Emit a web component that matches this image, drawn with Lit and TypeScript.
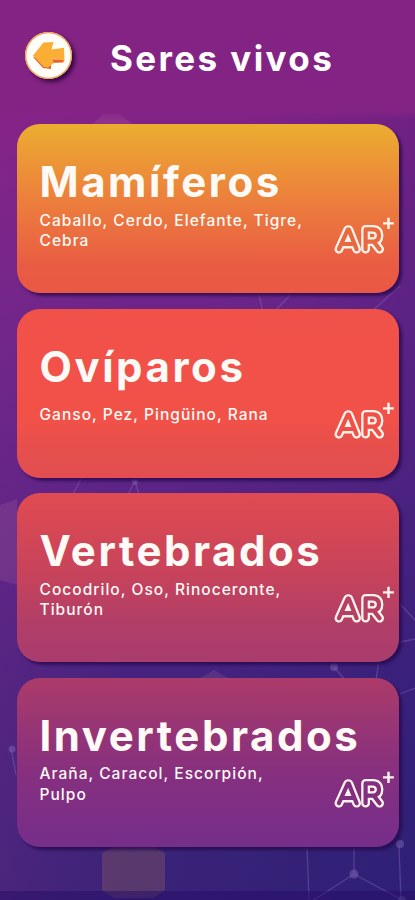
import { LitElement, html, css, svg } from "lit";
import { customElement, property } from "lit/decorators.js";

@customElement("ar-badge")
class ArBadge extends LitElement {
  static styles = css`
    :host { display: block; width: 62px; height: 42px; }
    svg { display: block; }
    .outer { stroke: #fff3ea; stroke-width: 8.8; }
    .inner { stroke: var(--fill); stroke-width: 4.2; }
    .stroke { fill: none; stroke-linecap: round; stroke-linejoin: round; }
    .plus { fill: none; stroke: #fff6ef; stroke-width: 2.4; }
  `;
  render() {
    const a = "M6.9 32.2L15.8 12.6H16.8L24.6 32.2M10.7 27H22";
    const r = "M33.6 32.2V12.4H41.5Q47 13.1 47 18.4Q47 23.8 41.5 24.6H34M42 25L47.6 32.2";
    return html`<svg width="62" height="42" viewBox="0 0 62 42">
      ${[a, r].map((d) => svg`
        <path class="stroke outer" d=${d} />
        <path class="stroke inner" d=${d} />`)}
      <path class="plus" d="M56.5 0.7V12M51 6.4H61.8" />
    </svg>`;
  }
}

@customElement("category-card")
class CategoryCard extends LitElement {
  @property() heading = "";
  @property() animals = "";
  @property({ reflect: true }) tone = "";

  static styles = css`
    :host {
      display: block;
      box-sizing: border-box;
      position: relative;
      height: 169px;
      border-radius: 23px;
      padding: 31px 0 0 22.5px;
      color: #fffaf6;
      box-shadow: 3px 3px 3px rgba(38, 10, 75, 0.75);
    }
    :host([tone="amber"]) { background: linear-gradient(#ebae30, #ec9a35 18%, #ec7c3d 48%, #e95c43 84%, #e95843); --fill: #e96940; }
    :host([tone="coral"]) { background: linear-gradient(#f05149, #f25148 65%, #e54f4d 84%, #e24e51); --fill: #f15048; }
    :host([tone="rose"]) { background: linear-gradient(#e04b50, #c7435b 48%, #b03e68 78%, #a93c6d); --fill: #b63f65; }
    :host([tone="plum"]) { background: linear-gradient(#ac3b69, #983575 28%, #852f80 60%, #752e8a); --fill: #822f82; }
    .heading {
      margin: 0;
      font: 700 42px/54px "Inter", sans-serif;
      letter-spacing: 2.55px;
      white-space: nowrap;
    }
    .animals {
      margin: 1.5px 0 0;
      width: 270px;
      font: 500 15.5px/20.5px "Inter", sans-serif;
      letter-spacing: 1.03px;
    }
    :host([tone="coral"]) .animals { margin-top: 11.5px; }
    .badge { position: absolute; right: 5px; bottom: 34px; }
  `;
  render() {
    return html`
      <h2 class="heading">${this.heading}</h2>
      <p class="animals">${this.animals}</p>
      <ar-badge class="badge"></ar-badge>
    `;
  }
}

const CATEGORIES = [
  { tone: "amber", heading: "Mamíferos", animals: "Caballo, Cerdo, Elefante, Tigre, Cebra" },
  { tone: "coral", heading: "Ovíparos", animals: "Ganso, Pez, Pingüino, Rana" },
  { tone: "rose", heading: "Vertebrados", animals: "Cocodrilo, Oso, Rinoceronte, Tiburón" },
  { tone: "plum", heading: "Invertebrados", animals: "Araña, Caracol, Escorpión, Pulpo" },
];

@customElement("app-root")
export class AppRoot extends LitElement {
  static styles = css`
    :host {
      display: block;
      position: relative;
      width: 415px;
      height: 900px;
      overflow: hidden;
      background:
        linear-gradient(90deg, rgba(145, 42, 140, 0.2), rgba(80, 30, 125, 0) 30%),
        linear-gradient(100deg, rgba(0, 0, 0, 0) 45%, rgba(20, 25, 110, 0.3)),
        linear-gradient(#832287 110px, #6e2589 300px, #5c2486 480px, #482380 660px, #3d237a 800px, #3a2378);
    }
    .backdrop { position: absolute; inset: 0; }
    .lines { fill: none; stroke: #8c70bd; stroke-opacity: 0.38; stroke-width: 1.3; }
    .node { fill: #7c65b3; fill-opacity: 0.5; }
    .hex { fill: #c883a4; fill-opacity: 0.17; }
    .warm { fill: #b07850; fill-opacity: 0.26; }
    .strip { fill: #250c65; fill-opacity: 0.5; }
    .top {
      position: relative;
      display: flex;
      align-items: flex-start;
      box-sizing: border-box;
      height: 124px;
      padding: 32px 0 0 25px;
      background: linear-gradient(#832485 110px, rgba(131, 36, 133, 0) 120px);
    }
    .back {
      width: 47px;
      height: 47px;
      padding: 0;
      border: 0;
      border-radius: 50%;
      background: #fffdf8;
      box-shadow: inset 0 0 0 1.3px #efa04c, 3px 3px 4px rgba(40, 0, 55, 0.85);
    }
    .back svg { display: block; }
    .title {
      margin: 1px 0 0 38px;
      font: 700 35px/50px "Inter", sans-serif;
      letter-spacing: 2.4px;
      color: #fff;
      white-space: nowrap;
    }
    .list {
      position: relative;
      display: flex;
      flex-direction: column;
      gap: 15.6px;
      padding: 0 16px 0 17px;
    }
  `;
  render() {
    return html`
      <svg class="backdrop" width="415" height="900" viewBox="0 0 415 900">
        <path class="hex" d="M93 124L103 114H120L132 124Z" />
        <path class="hex" d="M0 505L17 499V585L0 580Z" />
        <path class="warm" d="M102 853L115 846H153L165 853V890L153 898H114L102 890Z" />
        <path class="hex" d="M200 678L214 670L228 678Z" />
        <path class="lines" d="M259 295L263 312M290 295L276 310M400 286L371 312M82 477L71 498M135 481L126 498M135 481L140 498M400 604L415 620M400 642L415 639M334 667L345 680M379 660L376 680M400 694L415 688M11 748L16 775M307 846L309 900M354 846V874M399 846L401 900M354 874L309 903M354 874L402 900" />
        <circle class="node" cx="135" cy="482" r="3" />
        <circle class="node" cx="334" cy="667" r="4" />
        <circle class="node" cx="12" cy="749" r="3.5" />
        <circle class="node" cx="354" cy="874" r="4.5" />
        <circle class="node" cx="400" cy="844" r="4" />
        <circle class="node" cx="402" cy="900" r="4" />
        <rect class="strip" y="891" width="415" height="9" />
      </svg>
      <header class="top">
        <button class="back" aria-label="Volver">
          <svg width="47" height="47" viewBox="0 0 47 47">
            <path fill="#e8632b" d="M8 25L18 36L26 37L26 31L38 30.5L39.5 28L25 27Z" />
            <path fill="#fbae35" d="M8 23.5L18.5 10.5L28.5 10L26.5 17.5L39 15.7L39.5 28.7L27 26.5L29 31L23 35.5L18.5 34.7Z" />
          </svg>
        </button>
        <h1 class="title">Seres vivos</h1>
      </header>
      <main class="list">
        ${CATEGORIES.map((c) => html`
          <category-card tone=${c.tone} .heading=${c.heading} .animals=${c.animals}></category-card>`)}
      </main>
    `;
  }
}
